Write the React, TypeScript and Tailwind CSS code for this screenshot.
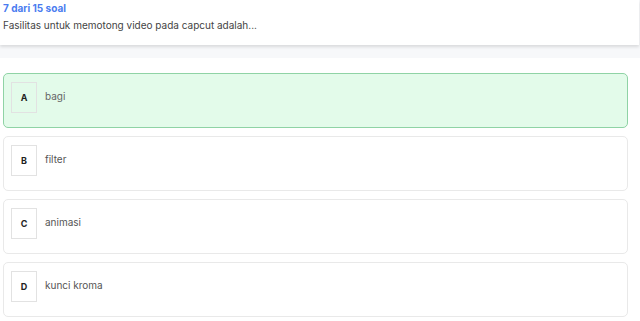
import React from "react"

const options = [
  { key: "A", label: "bagi", selected: true },
  { key: "B", label: "filter", selected: false },
  { key: "C", label: "animasi", selected: false },
  { key: "D", label: "kunci kroma", selected: false },
]

export default function App() {
  return (
    <div className="w-[640px] h-[321px] bg-white overflow-hidden" style={{ fontFamily: "Inter, 'Open Sans', sans-serif" }}>
      {/* Header */}
      <div className="bg-[#f7f8fa] pb-[13px]">
        <div className="bg-white w-[639px] h-[45px] px-[3px] pt-[1px] shadow-[0_2px_3px_rgba(0,0,0,0.12)]">
          <p className="text-[10px] font-bold text-[#4a7cf0] leading-[14px]">7 dari 15 soal</p>
          <p className="text-[10px] text-[#444] leading-[14px] mt-[3px]">Fasilitas untuk memotong video pada capcut adalah...</p>
        </div>
      </div>

      {/* Options */}
      <div className="flex flex-col gap-[8px] pt-[15px] pl-[3px]">
        {options.map((o) => (
          <div
            key={o.key}
            className={
              o.selected
                ? "w-[625px] h-[55px] flex items-start gap-[8px] px-[7px] pt-[8px] rounded-[5px] border border-[#8fd3a5] bg-[#e3fbea]"
                : "w-[625px] h-[55px] flex items-start gap-[8px] px-[7px] pt-[8px] rounded-[5px] border border-[#e9e9e9] bg-white"
            }
          >
            <div className="w-[26px] h-[31px] flex items-center justify-center border border-[#e2e2e2] text-[9px] font-bold text-[#222]">
              {o.key}
            </div>
            <span className={o.selected ? "text-[10px] text-[#666] leading-[14px] mt-[7px]" : "text-[10px] text-[#555] leading-[14px] mt-[7px]"}>{o.label}</span>
          </div>
        ))}
      </div>
    </div>
  )
}
